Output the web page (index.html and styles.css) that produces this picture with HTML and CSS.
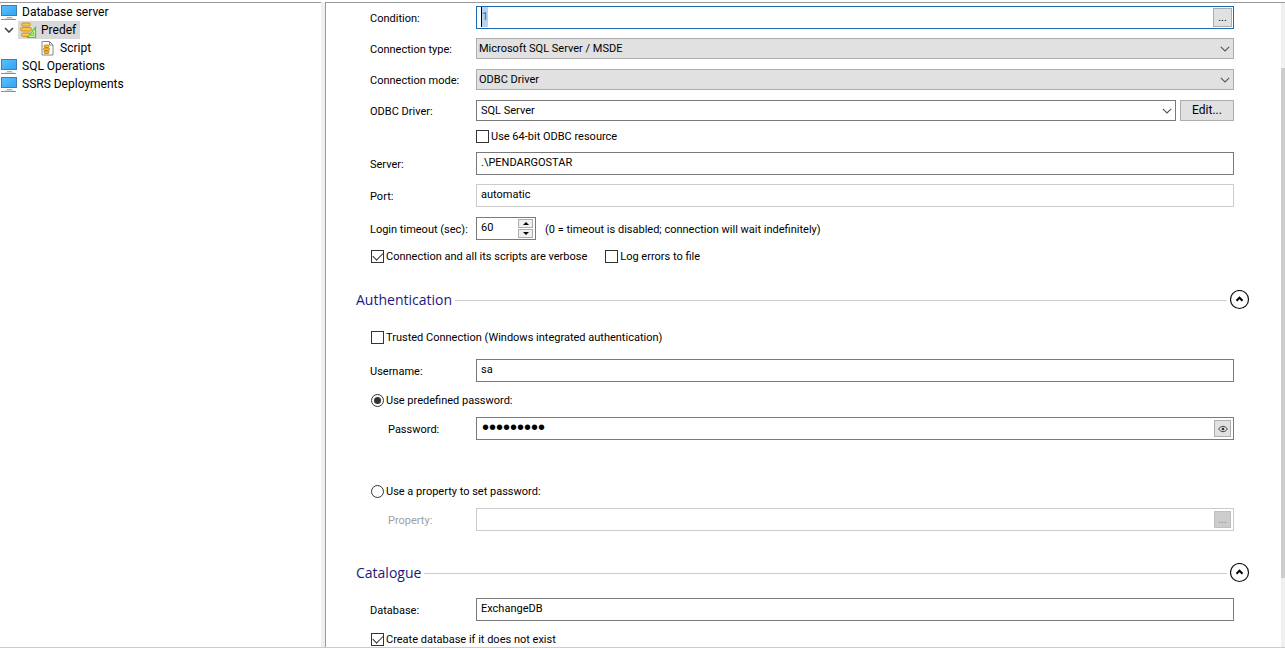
FILE: index.html
```
<!DOCTYPE html>
<html lang="en">
<head>
<meta charset="utf-8">
<title>Database server</title>
<link rel="stylesheet" href="styles.css">
</head>
<body>
<svg class="defs" aria-hidden="true">
  <defs>
    <linearGradient id="screen" x1="0" y1="0" x2="1" y2="1"><stop offset="0" stop-color="#5cc0fb"/><stop offset="1" stop-color="#2fa4f4"/></linearGradient>
    <symbol id="monitor" viewBox="0 0 18 16">
      <rect x="1.5" y="1.5" width="15" height="10" fill="url(#screen)" stroke="#3f7fae"/>
      <path d="M7 13.5h5" stroke="#9db4c6"/><path d="M1 15.500h15" stroke="#7d93b4"/><path d="M5 14.500h9" stroke="#d5dde6"/>
    </symbol>
    <symbol id="chevron" viewBox="0 0 10 6"><path d="M.8 .8 5 5 9.200 .8" fill="none" stroke="#555" stroke-width="1.100"/></symbol>
    <symbol id="collapse" viewBox="0 0 20 20"><circle cx="9.500" cy="9.500" r="9" fill="#fff" stroke="#111" stroke-width="1.200"/><path d="M6.500 10.700 9.500 7.700l3 3" fill="none" stroke="#000" stroke-width="2"/></symbol>
  </defs>
</svg>
<div class="app">
  <nav class="tree" aria-label="Connections">
    <a class="node" href="#"><svg class="monitor"><use href="#monitor"/></svg><span>Database server</span></a>
    <div class="branch">
      <button class="toggle" aria-label="Collapse Predef"><svg width="10" height="6" viewBox="0 0 10 6"><path d="M1 1l4 4 4-4" fill="none" stroke="#444" stroke-width="1.600"/></svg></button>
      <a class="node selected" href="#"><svg width="18" height="17" viewBox="0 0 18 17">
        <g fill="#fbc64a" stroke="#c98a12" stroke-width=".9"><rect x="2.500" y="1" width="9" height="3" rx="1.500"/><rect x="1.500" y="5.500" width="11" height="3.500" rx="1.700"/><rect x="2.500" y="11" width="9" height="3.500" rx="1.700"/></g>
        <path d="M8.500 15.500 16.500 5.500v10z" fill="#c9f59b" stroke="#5cc31d" stroke-width="1.200"/><path d="M12 13.500 14.500 10.500v3z" fill="#fff" stroke="#5cc31d" stroke-width=".8"/>
      </svg><span>Predef</span></a>
    </div>
    <a class="node leaf" href="#"><svg width="13" height="16" viewBox="0 0 13 16">
      <path d="M1 1.500h7.500l3.500 3.500v10H1z" fill="#fff" stroke="#888"/><path d="M8.500 1.500V5H12" fill="none" stroke="#888"/>
      <g fill="#f7b92e" stroke="#b97d10" stroke-width=".8"><rect x="3" y="5" width="5" height="2.500" rx="1"/><rect x="2.500" y="8" width="6" height="2.500" rx="1"/><rect x="3" y="11" width="5" height="2.500" rx="1"/></g>
    </svg><span>Script</span></a>
    <a class="node" href="#"><svg class="monitor"><use href="#monitor"/></svg><span>SQL Operations</span></a>
    <a class="node" href="#"><svg class="monitor"><use href="#monitor"/></svg><span>SSRS Deployments</span></a>
  </nav>
  <div class="splitter"></div>
  <main class="pane">
    <form class="form">
      <div class="row first"><label for="condition">Condition:</label>
        <div class="field active"><input id="condition" class="marked" value="1"><button type="button" class="more">...</button></div></div>
      <div class="row snug"><label for="type">Connection type:</label>
        <div class="combo gray"><select id="type"><option>Microsoft SQL Server / MSDE</option></select><svg class="arrow"><use href="#chevron"/></svg></div></div>
      <div class="row"><label for="mode">Connection mode:</label>
        <div class="combo gray"><select id="mode"><option>ODBC Driver</option></select><svg class="arrow"><use href="#chevron"/></svg></div></div>
      <div class="row"><label for="driver">ODBC Driver:</label>
        <div class="combo"><select id="driver"><option>SQL Server</option></select><svg class="arrow"><use href="#chevron"/></svg></div><button type="button" class="edit">Edit...</button></div>
      <div class="row snug offset"><label class="check"><input type="checkbox">Use 64-bit ODBC resource</label></div>
      <div class="row snug"><label for="server">Server:</label><div class="field"><input id="server" value=".\PENDARGOSTAR"></div></div>
      <div class="row snug"><label for="port">Port:</label><div class="field pale"><input id="port" value="automatic"></div></div>
      <div class="row"><label for="timeout">Login timeout (sec):</label>
        <div class="field spin"><input id="timeout" value="60"><span class="steps"><button type="button" aria-label="Increase"><svg width="6" height="3" viewBox="0 0 6 3"><path d="M0 3 3 0l3 3z"/></svg></button><button type="button" aria-label="Decrease"><svg width="6" height="3" viewBox="0 0 6 3"><path d="M0 0l3 3 3-3z"/></svg></button></span></div>
        <span class="hint">(0 = timeout is disabled; connection will wait indefinitely)</span></div>
      <div class="row pair"><label class="check"><input type="checkbox" checked>Connection and all its scripts are verbose</label><label class="check"><input type="checkbox">Log errors to file</label></div>

      <div class="section"><h2>Authentication</h2><span class="rule"></span><button type="button" class="collapse" aria-label="Collapse Authentication"><svg><use href="#collapse"/></svg></button></div>
      <div class="row opening"><label class="check"><input type="checkbox">Trusted Connection (Windows integrated authentication)</label></div>
      <div class="row loose"><label for="user">Username:</label><div class="field"><input id="user" value="sa"></div></div>
      <div class="row medium"><label class="check"><input type="radio" name="pw" checked>Use predefined password:</label></div>
      <div class="row sub"><label for="password">Password:</label>
        <div class="field"><input id="password" type="password" value="predefsec"><button type="button" class="more small" aria-label="Show password"><svg width="10" height="8" viewBox="0 0 10 8"><path d="M.5 4Q5-1.500 9.500 4 5 9.500 .5 4z" fill="none" stroke="#333" stroke-width=".9"/><circle cx="5" cy="4" r="1.300" fill="#333"/></svg></button></div></div>
      <div class="row apart"><label class="check"><input type="radio" name="pw">Use a property to set password:</label></div>
      <div class="row sub off"><label for="property">Property:</label>
        <div class="field pale"><input id="property" disabled><button type="button" class="more small" disabled>...</button></div></div>

      <div class="section lower"><h2>Catalogue</h2><span class="rule"></span><button type="button" class="collapse" aria-label="Collapse Catalogue"><svg><use href="#collapse"/></svg></button></div>
      <div class="row loose"><label for="database">Database:</label><div class="field"><input id="database" value="ExchangeDB"></div></div>
      <div class="row medium"><label class="check"><input type="checkbox" checked>Create database if it does not exist</label></div>
    </form>
    <div class="scroll"><div class="thumb"></div></div>
  </main>
</div>
</body>
</html>
```
FILE: styles.css
```
* { box-sizing: border-box; }
body { margin: 0; background: #fff; color: #000; font: 11px/13px Roboto, sans-serif; }
button, input, select { font: inherit; color: inherit; margin: 0; padding: 0; border-radius: 0; }
button { display: flex; align-items: center; justify-content: center; }
svg { display: block; flex: none; }
.defs { position: absolute; width: 0; height: 0; }
.app { display: flex; height: 100vh; padding-top: 2px; border-bottom: 1px solid #ccc; overflow: hidden; }

.tree { width: 321px; flex: none; border-top: 1px solid #999; font: 12px/18px Roboto, sans-serif; }
.node { display: flex; align-items: center; gap: 4px; width: max-content; height: 18px; color: #000; text-decoration: none; }
.monitor { width: 18px; height: 16px; }
.branch { display: flex; }
.toggle { width: 18px; height: 18px; border: 0; background: none; }
.selected { background: #d9d9d9; padding: 0 4px 0 1px; }
.leaf { padding-left: 41px; gap: 6px; }
.splitter { width: 5px; flex: none; background: #f0f0f0; border-right: 1px solid #999; }

.pane { flex: 1; min-width: 0; display: flex; border-top: 1px solid #999; overflow: hidden; }
.form { flex: 1; min-width: 0; padding: 0 31px 0 44px; }
.scroll { width: 4px; flex: none; padding-top: 65px; background: #f0f0f0; }
.thumb { height: 88%; background: #cdcdcd; }

.row { display: flex; align-items: center; margin: 10px 16px 0 0; }
.row > label:not(.check) { width: 106px; flex: none; padding-top: 2px; }
.row.first { margin-top: 3px; }
.row.snug { margin-top: 9px; }
.row.medium { margin-top: 12px; }
.row.loose { margin-top: 15px; }
.row.opening { margin-top: 21px; }
.row.apart { margin-top: 45px; }
.row.offset { padding-left: 106px; }
.row.sub > label { padding-left: 18px; }
.off { color: #a0a0a0; }

.field { flex: 1; display: flex; align-items: center; height: 23px; padding-right: 2px; border: 1px solid #7a7a7a; background: #fff; }
.field input { flex: 1; width: 100%; min-width: 0; height: 21px; padding: 0 4px 2px; border: 0; outline: 0; background: none; }
.field .marked { padding-left: 5px; color: #456a94; background: linear-gradient(90deg, #000 1px, #b3d4f5 1px) 4px 0 / 7px 20px no-repeat; }
.field.active { padding-right: 1px; border-color: #1c6bb0; }
.field.pale { border-color: #ccc; }
.field input[type=password] { padding-left: 5px; font: 20px/20px "Liberation Sans", sans-serif; }
.more { width: 19px; height: 19px; flex: none; border: 1px solid #adadad; background: #e1e1e1; }
.more.small { width: 17px; height: 17px; }
.more:disabled { background: #ccc; border-color: #bfbfbf; color: #888; }

.combo { flex: 1; position: relative; height: 21px; }
.combo select { appearance: none; width: 100%; height: 21px; padding: 0 20px 0 4px; border: 1px solid #7a7a7a; background: #fff; outline: 0; }
.combo.gray select { padding-left: 2px; border-color: #adadad; background: #e1e1e1; }
.arrow { position: absolute; right: 4px; top: 8px; width: 10px; height: 6px; pointer-events: none; }
.edit { width: 54px; height: 21px; margin-left: 4px; border: 1px solid #adadad; background: #e1e1e1; font-size: 12px; }

.spin { flex: none; width: 60px; }
.steps { display: flex; flex-direction: column; gap: 1px; }
.steps button { width: 15px; height: 9px; border: 1px solid #adadad; background: #f0f0f0; }
.hint { margin-left: 9px; padding-top: 2px; }

.check { display: flex; align-items: center; gap: 2px; height: 13px; line-height: 14px; margin-left: 1px; }
.offset .check { margin-left: 0; }
.check input { appearance: none; width: 13px; height: 13px; flex: none; border: 1px solid #333; background: #fff; display: grid; place-items: center; }
.check input[type=radio] { border-radius: 50%; }
.check input[type=radio]:checked::before { content: ""; width: 7px; height: 7px; border-radius: 50%; background: #333; }
.check input[type=checkbox]:checked::before { content: ""; width: 9px; height: 5px; margin-bottom: 3px; border: solid #333; border-width: 0 0 1px 1px; transform: rotate(-45deg); }
.pair { gap: 17px; }

.section { display: flex; align-items: center; height: 20px; margin: 27px 0 0 -14px; }
.section.lower { margin-top: 32px; }
.section h2 { margin: 0; color: #1a1a80; font: 14px/20px "Open Sans", sans-serif; }
.rule { flex: 1; height: 1px; margin: 0 3px; background: #ccc; }
.collapse { width: 20px; height: 20px; border: 0; background: none; }
.collapse svg { width: 20px; height: 20px; }
```
